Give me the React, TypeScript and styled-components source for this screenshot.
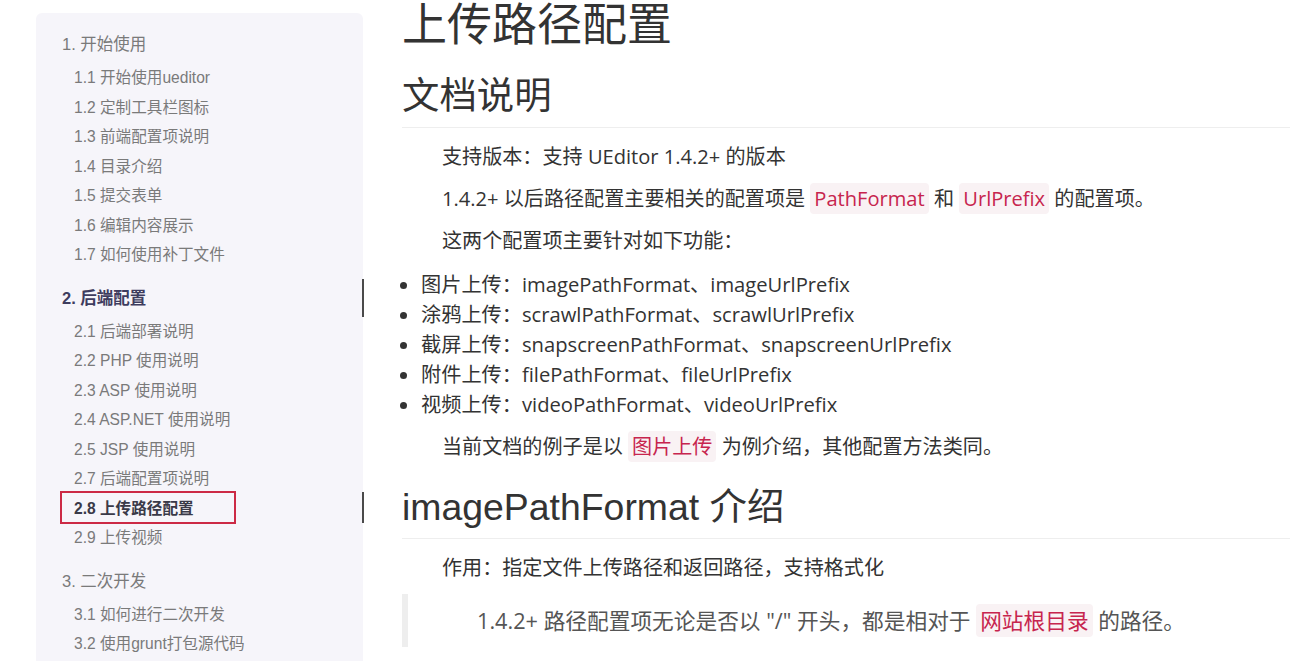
import React from "react";
import styled, { createGlobalStyle, css } from "styled-components";

const Global = createGlobalStyle`
  html, body { margin: 0; padding: 0; background: #fff; overflow: hidden; }
  body { font-family: "Open Sans", "Noto Sans CJK SC", sans-serif; color: #333; }
`;

const Page = styled.div`
  display: flex;
  align-items: flex-start;
  padding-left: 36px;
  gap: 39px;
  width: 1290px;
  height: 661px;
  box-sizing: border-box;
  overflow: hidden;
`;

const Sidebar = styled.nav`
  flex: 0 0 327px;
  margin-top: 13px;
  min-height: 700px;
  background: #f6f5fa;
  border-top-left-radius: 6px;
  border-top-right-radius: 6px;
  padding-top: 16px;
  box-sizing: border-box;
  font-family: "Liberation Sans", "Noto Sans CJK SC", sans-serif;
`;

const Group = styled.div`
  margin-bottom: 13px;
`;

const Bar = css`
  &::after {
    content: "";
    position: absolute;
    right: -1px;
    width: 2px;
    background: #4a4a4a;
  }
`;

const GroupTitle = styled.div<{ $active?: boolean }>`
  position: relative;
  height: 30px;
  line-height: 30px;
  padding-left: 26px;
  margin-bottom: 4px;
  font-size: 16.5px;
  color: ${(p) => (p.$active ? "#3e3c5e" : "#7a7a7a")};
  font-weight: ${(p) => (p.$active ? 700 : 400)};
  ${(p) =>
    p.$active &&
    css`
      ${Bar}
      &::after { top: -4px; bottom: -4px; }
    `}
`;

const Item = styled.div<{ $current?: boolean }>`
  position: relative;
  height: 29.5px;
  line-height: 29.5px;
  padding-left: 38px;
  font-size: 15.6px;
  color: ${(p) => (p.$current ? "#3a3a48" : "#7a7a7a")};
  font-weight: ${(p) => (p.$current ? 700 : 400)};
  ${(p) =>
    p.$current &&
    css`
      ${Bar}
      &::after { top: -2px; bottom: 0; }
      &::before {
        content: "";
        position: absolute;
        left: 24px;
        top: -2.5px;
        width: 176px;
        height: 33px;
        box-sizing: border-box;
        border: 2px solid #cc2a45;
      }
    `}
`;

const Main = styled.main`
  flex: 1;
  min-width: 0;
`;

const H1 = styled.h1`
  margin: 0;
  font-family: "Liberation Sans", "Noto Sans CJK SC", sans-serif;
  font-weight: 400;
  font-size: 45px;
  line-height: 52px;
  color: #333;
`;

const H2 = styled.h2<{ $gap: number }>`
  margin: ${(p) => p.$gap}px 0 0;
  padding-bottom: 9px;
  border-bottom: 1px solid #eee;
  font-family: "Liberation Sans", "Noto Sans CJK SC", sans-serif;
  font-weight: 400;
  font-size: 37.4px;
  line-height: 44px;
  color: #333;
`;

const P = styled.p<{ $gap: number }>`
  margin: ${(p) => p.$gap}px 0 0;
  text-indent: 40px;
  font-size: 20.1px;
  line-height: 30px;
  color: #333;
`;

const Code = styled.code`
  font-family: inherit;
  font-size: inherit;
  color: #c7254e;
  background: #f9f2f4;
  border-radius: 4px;
  padding: 2px 4px;
`;

const List = styled.ul`
  margin: 13px 0 0;
  padding-left: 19px;
  font-size: 20.2px;
  line-height: 30px;
  color: #333;
`;

const Quote = styled.blockquote`
  margin: 11px 0 0;
  border-left: 6px solid #eee;
  padding: 12px 0 11px 29px;
  font-size: 21.7px;
  line-height: 30px;
  color: #555;
  text-indent: 40px;
`;

const nav = [
  {
    title: "1. 开始使用",
    items: [
      "1.1 开始使用ueditor",
      "1.2 定制工具栏图标",
      "1.3 前端配置项说明",
      "1.4 目录介绍",
      "1.5 提交表单",
      "1.6 编辑内容展示",
      "1.7 如何使用补丁文件",
    ],
  },
  {
    title: "2. 后端配置",
    active: true,
    items: [
      "2.1 后端部署说明",
      "2.2 PHP 使用说明",
      "2.3 ASP 使用说明",
      "2.4 ASP.NET 使用说明",
      "2.5 JSP 使用说明",
      "2.7 后端配置项说明",
      "2.8 上传路径配置",
      "2.9 上传视频",
    ],
  },
  {
    title: "3. 二次开发",
    items: ["3.1 如何进行二次开发", "3.2 使用grunt打包源代码"],
  },
];

const features = [
  ["图片上传：", "imagePathFormat、imageUrlPrefix"],
  ["涂鸦上传：", "scrawlPathFormat、scrawlUrlPrefix"],
  ["截屏上传：", "snapscreenPathFormat、snapscreenUrlPrefix"],
  ["附件上传：", "filePathFormat、fileUrlPrefix"],
  ["视频上传：", "videoPathFormat、videoUrlPrefix"],
];

export default function App() {
  return (
    <>
      <Global />
      <Page>
        <Sidebar>
          {nav.map((g) => (
            <Group key={g.title}>
              <GroupTitle $active={g.active}>{g.title}</GroupTitle>
              {g.items.map((it) => (
                <Item key={it} $current={it === "2.8 上传路径配置"}>
                  {it}
                </Item>
              ))}
            </Group>
          ))}
        </Sidebar>
        <Main>
          <H1>上传路径配置</H1>
          <H2 $gap={22}>文档说明</H2>
          <P $gap={14}>支持版本：支持 UEditor 1.4.2+ 的版本</P>
          <P $gap={12}>
            1.4.2+ 以后路径配置主要相关的配置项是 <Code>PathFormat</Code> 和{" "}
            <Code>UrlPrefix</Code> 的配置项。
          </P>
          <P $gap={12}>这两个配置项主要针对如下功能：</P>
          <List>
            {features.map(([a, b]) => (
              <li key={a}>
                {a}
                {b}
              </li>
            ))}
          </List>
          <P $gap={13}>
            当前文档的例子是以 <Code>图片上传</Code> 为例介绍，其他配置方法类同。
          </P>
          <H2 $gap={23}>imagePathFormat 介绍</H2>
          <P $gap={14}>作用：指定文件上传路径和返回路径，支持格式化</P>
          <Quote>
            1.4.2+ 路径配置项无论是否以 "/" 开头，都是相对于 <Code>网站根目录</Code> 的路径。
          </Quote>
        </Main>
      </Page>
    </>
  );
}
